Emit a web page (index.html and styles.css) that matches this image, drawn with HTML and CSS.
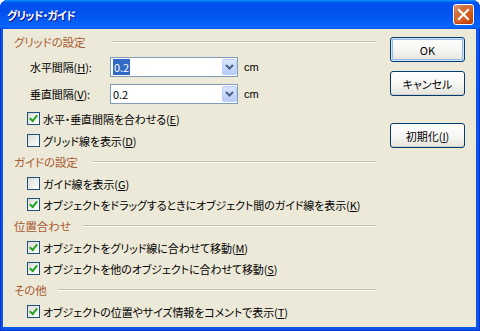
FILE: index.html
```html
<!DOCTYPE html>
<html lang="ja">
<head>
  <meta charset="UTF-8">
  <title>グリッド・ガイド</title>
  <link rel="stylesheet" href="styles.css">
</head>
<body>
  <div class="window">
    <div class="titlebar">
      <span class="title">グリッド・ガイド</span>
      <button class="close">
        <svg width="13" height="13" viewBox="0 0 13 13"><path d="M2 2 L11 11 M11 2 L2 11" stroke="#fff" stroke-width="2.2" stroke-linecap="square"/></svg>
      </button>
    </div>
    <div class="client">
      <div class="settings">
        <div class="group"><span class="group-name grid">グリッドの設定</span></div>
        <div class="field">
          <span class="field-label">水平間隔(<u>H</u>):</span>
          <div class="combo">
            <span class="combo-value"><span class="selected">0.2</span></span>
            <span class="combo-btn"><svg width="9" height="6" viewBox="0 0 9 6"><path d="M1 1 L4.5 4.5 L8 1" fill="none" stroke="#4d6185" stroke-width="2"/></svg></span>
          </div>
          <span class="unit">cm</span>
        </div>
        <div class="field">
          <span class="field-label">垂直間隔(<u>V</u>):</span>
          <div class="combo">
            <span class="combo-value">0.2</span>
            <span class="combo-btn"><svg width="9" height="6" viewBox="0 0 9 6"><path d="M1 1 L4.5 4.5 L8 1" fill="none" stroke="#4d6185" stroke-width="2"/></svg></span>
          </div>
          <span class="unit">cm</span>
        </div>
        <label class="check first"><span class="box on"></span>水平・垂直間隔を合わせる(<u>E</u>)</label>
        <label class="check"><span class="box"></span>グリッド線を表示(<u>D</u>)</label>

        <div class="group"><span class="group-name guide">ガイドの設定</span></div>
        <label class="check"><span class="box"></span>ガイド線を表示(<u>G</u>)</label>
        <label class="check"><span class="box on"></span>オブジェクトをドラッグするときにオブジェクト間のガイド線を表示(<u>K</u>)</label>

        <div class="group"><span class="group-name align">位置合わせ</span></div>
        <label class="check"><span class="box on"></span>オブジェクトをグリッド線に合わせて移動(<u>M</u>)</label>
        <label class="check"><span class="box on"></span>オブジェクトを他のオブジェクトに合わせて移動(<u>S</u>)</label>

        <div class="group"><span class="group-name other">その他</span></div>
        <label class="check"><span class="box on"></span>オブジェクトの位置やサイズ情報をコメントで表示(<u>T</u>)</label>
      </div>
      <div class="buttons">
        <button class="btn default">OK</button>
        <button class="btn">キャンセル</button>
        <button class="btn reset">初期化(<u>I</u>)</button>
      </div>
    </div>
  </div>
</body>
</html>
```

FILE: styles.css
```css
body {
  margin: 0;
  background: #fff;
  font-family: "Noto Sans CJK JP", sans-serif;
  font-size: 11px;
  letter-spacing: -0.1px;
  font-feature-settings: "palt";
}

.window {
  width: 480px;
  height: 331px;
  display: flex;
  flex-direction: column;
  background: #0a56e6;
  border-radius: 8px 8px 0 0;
  box-shadow: inset 1px 0 #0831d9, inset -1px 0 #0831d9, inset 0 -1px #0831d9;
  overflow: hidden;
}

.titlebar {
  height: 29px;
  flex: none;
  display: flex;
  align-items: center;
  justify-content: space-between;
  padding: 0 6px 0 7px;
  background: linear-gradient(to bottom, #0997ff 0, #0053ee 9%, #0050ee 40%, #0762f8 85%, #0a65fb 93%, #0058f0 97%, #0a56e6 100%);
}

.title {
  color: #fff;
  font-weight: bold;
  font-size: 11px;
  letter-spacing: -0.8px;
  text-shadow: 1px 1px #0f1089;
}

.close {
  width: 21px;
  height: 21px;
  padding: 0;
  display: flex;
  align-items: center;
  justify-content: center;
  border: 1px solid #fff;
  border-radius: 3px;
  background: radial-gradient(circle at 90% 90%, #cc4600 0, #dc6527 55%, #cd7546 70%, #e8a080 100%);
  box-shadow: inset 0 -1px 2px #b23a14;
}

.client {
  flex: 1;
  margin: 0 4px 4px 3px;
  display: flex;
  background: #ece9d8;
  padding: 2px 11px 0 11px;
}

.settings {
  width: 362px;
  display: flex;
  flex-direction: column;
}

.group {
  height: 22px;
  display: flex;
  align-items: center;
  color: #a85a32;
  font-size: 11.5px;
}

.group-name.grid { width: 98px; }
.group-name.guide { width: 78px; }
.group-name.align { width: 69px; }
.group-name.other { width: 44px; }

.group::after {
  content: "";
  flex: 1;
  height: 0;
  border-top: 1px solid #c5c2b2;
  border-bottom: 1px solid #fff;
}

.field {
  height: 27px;
  display: flex;
  align-items: center;
  padding-left: 16px;
}

.field-label {
  width: 80px;
}

.combo {
  width: 123px;
  height: 18px;
  display: flex;
  align-items: center;
  justify-content: space-between;
  border: 1px solid #7f9db9;
  background: #fff;
  padding: 0 1px 0 2px;
}

.combo-value {
  font-size: 11px;
  line-height: 14px;
}

.selected {
  background: #316ac5;
  color: #fff;
  padding: 0 1px;
}

.combo-btn {
  width: 15px;
  height: 16px;
  display: flex;
  align-items: center;
  justify-content: center;
  border: 1px solid #bad1fc;
  border-radius: 2px;
  background: linear-gradient(to bottom, #dbe6fd, #b7cbf6);
  box-sizing: border-box;
  margin-right: -1px;
}

.unit {
  margin-left: 6px;
  font-family: "Liberation Sans", sans-serif;
  font-size: 11px;
}

.check {
  height: 21px;
  display: flex;
  align-items: center;
  padding-left: 13px;
  line-height: 14px;
  white-space: nowrap;
}

.check.first {
  height: 23px;
}

.box {
  width: 13px;
  height: 13px;
  box-sizing: border-box;
  border: 1px solid #1c5180;
  background: linear-gradient(135deg, #dcdcd7, #fff);
  margin-right: 3px;
  flex: none;
  position: relative;
}

.box.on::after {
  content: "";
  position: absolute;
  left: 2px;
  top: 0px;
  width: 3px;
  height: 6px;
  border-right: 2px solid #21a121;
  border-bottom: 2px solid #21a121;
  transform: translate(1px, 0.5px) rotate(40deg);
}

.buttons {
  width: 75px;
  margin-left: 14px;
  padding-top: 6px;
  display: flex;
  flex-direction: column;
  gap: 9px;
}

.btn {
  height: 25px;
  padding: 0;
  font-family: "Noto Sans CJK JP", sans-serif;
  font-size: 11px;
  font-feature-settings: "palt";
  color: #000;
  border: 1px solid #003c74;
  border-radius: 3px;
  background: linear-gradient(to bottom, #fff 0, #f4f4f0 60%, #e3e2da 100%);
  box-shadow: inset 0 -1px #d6d0c5;
}

.btn.default {
  box-shadow: inset 0 0 0 1px #cee7ff, inset 0 0 0 2px #98b8ea, inset 0 -2px #bcd4f6;
}

.btn.reset {
  margin-top: 18px;
}
```
